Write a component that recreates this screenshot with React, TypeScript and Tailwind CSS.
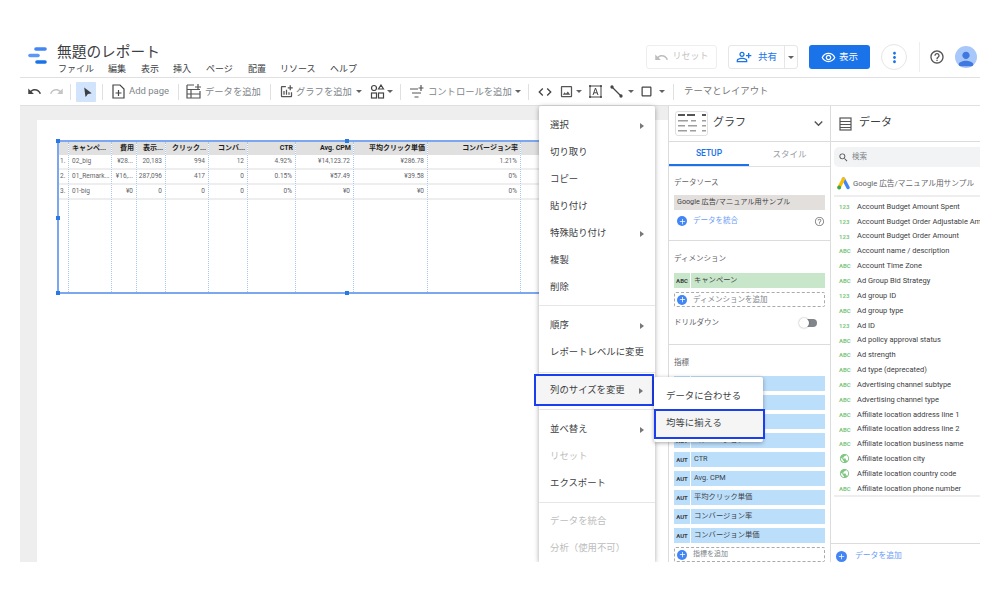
import {
  MdUndo,
  MdRedo,
  MdOutlinePersonAddAlt,
  MdOutlineRemoveRedEye,
  MdMoreVert,
  MdHelpOutline,
  MdSearch,
  MdExpandMore,
  MdCode,
  MdOutlineImage,
  MdCropSquare,
  MdOutlineAddchart,
  MdPublic,
  MdPerson,
  MdAdd,
  MdNavigation,
} from 'react-icons/md';

const font = { fontFamily: '"Roboto", "Noto Sans CJK JP", sans-serif' };

const menuBar = [
  { label: 'ファイル', w: 'w-[50px]' },
  { label: '編集', w: 'w-[33px]' },
  { label: '表示', w: 'w-[32px]' },
  { label: '挿入', w: 'w-[33px]' },
  { label: 'ページ', w: 'w-[42px]' },
  { label: '配置', w: 'w-[32px]' },
  { label: 'リソース', w: 'w-[50px]' },
  { label: 'ヘルプ', w: 'w-[40px]' },
];

const columns = [
  { w: 'w-[10px]', head: '', cells: ['1.', '2.', '3.'], left: true },
  { w: 'w-[43px]', head: 'キャンペ...', cells: ['02_big', '01_Remark...', '01-big'], left: true },
  { w: 'w-[25px]', head: '費用', cells: ['¥28...', '¥16,...', '¥0'], left: false },
  { w: 'w-[29px]', head: '表示...', cells: ['20,183', '287,096', '0'], left: false },
  { w: 'w-[43px]', head: 'クリック...', cells: ['994', '417', '0'], left: false },
  { w: 'w-[39px]', head: 'コンバ...', cells: ['12', '0', '0'], left: false },
  { w: 'w-[48px]', head: 'CTR', cells: ['4.92%', '0.15%', '0%'], left: false },
  { w: 'w-[58px]', head: 'Avg. CPM', cells: ['¥14,123.72', '¥57.49', '¥0'], left: false },
  { w: 'w-[74px]', head: '平均クリック単価', cells: ['¥286.78', '¥39.58', '¥0'], left: false },
  { w: 'w-[93px]', head: 'コンバージョン率', cells: ['1.21%', '0%', '0%'], left: false },
  { w: 'w-[114px]', head: '', cells: ['', '', ''], left: false },
];

// the first rows sit under the submenu, so their names never show
const metrics = ['', '', '', 'コンバージョン', 'CTR', 'Avg. CPM', '平均クリック単価', 'コンバージョン率', 'コンバージョン単価'];

const fields = [
  ['123', 'Account Budget Amount Spent'],
  ['123', 'Account Budget Order Adjustable Amount'],
  ['123', 'Account Budget Order Amount'],
  ['ABC', 'Account name / description'],
  ['ABC', 'Account Time Zone'],
  ['ABC', 'Ad Group Bid Strategy'],
  ['123', 'Ad group ID'],
  ['ABC', 'Ad group type'],
  ['123', 'Ad ID'],
  ['ABC', 'Ad policy approval status'],
  ['ABC', 'Ad strength'],
  ['ABC', 'Ad type (deprecated)'],
  ['ABC', 'Advertising channel subtype'],
  ['ABC', 'Advertising channel type'],
  ['ABC', 'Affiliate location address line 1'],
  ['ABC', 'Affiliate location address line 2'],
  ['ABC', 'Affiliate location business name'],
  ['GEO', 'Affiliate location city'],
  ['GEO', 'Affiliate location country code'],
  ['ABC', 'Affiliate location phone number'],
];

function Caret({ className = '' }: { className?: string }) {
  return <span className={`inline-block w-0 h-0 border-x-[3px] border-x-transparent border-t-[3px] border-t-[#5f6368] ${className}`} />;
}

function SideArrow() {
  return <span className="inline-block w-0 h-0 border-y-[3.5px] border-y-transparent border-l-[4px] border-l-[#777]" />;
}

function Sep({ className = '' }: { className?: string }) {
  return <div className={`w-px h-[16px] bg-[#e0e0e0] shrink-0 ${className}`} />;
}

function PlusDot({ className = '' }: { className?: string }) {
  return (
    <span className={`flex items-center justify-center rounded-full bg-[#4285f4] text-white shrink-0 ${className}`}>
      <MdAdd size={9} />
    </span>
  );
}

function Logo() {
  return (
    <svg width="20" height="20" viewBox="0 0 20 20">
      <line x1="8" y1="3" x2="17" y2="3" stroke="#4285f4" strokeWidth="3.6" strokeLinecap="round" />
      <line x1="2" y1="9.5" x2="10" y2="9.5" stroke="#5e97f6" strokeWidth="3.6" strokeLinecap="round" />
      <line x1="9" y1="16" x2="17" y2="16" stroke="#1a73e8" strokeWidth="3.6" strokeLinecap="round" />
    </svg>
  );
}

function AddPageIcon() {
  return (
    <svg width="13" height="15" viewBox="0 0 13 15" fill="none" stroke="#444" strokeWidth="1.2">
      <path d="M1 1h7l4 4v9H1z" />
      <path d="M6.500 6v6M3.500 9h6" />
    </svg>
  );
}

function AddDataIcon() {
  return (
    <svg width="16" height="15" viewBox="0 0 16 15" fill="none" stroke="#555" strokeWidth="1.2">
      <path d="M1 1h7M1 1v13h13V7M1 5.500h13M1 10h13M5 5.500V14" />
      <path d="M12 0v6M9 3h6" />
    </svg>
  );
}

function ComponentsIcon() {
  return (
    <svg width="15" height="15" viewBox="0 0 15 15" fill="none" stroke="#444" strokeWidth="1.2">
      <circle cx="4" cy="4" r="2.500" />
      <path d="M11 1l2.500 4h-5z" />
      <rect x="1.500" y="9" width="5" height="5" />
      <rect x="8.500" y="9" width="5" height="5" />
    </svg>
  );
}

function ControlsIcon() {
  return (
    <svg width="15" height="13" viewBox="0 0 15 13" fill="none" stroke="#555" strokeWidth="1.2">
      <path d="M1 4h8M3 8h9M5.500 12h4" />
      <path d="M12 0v6M9.500 3h5" />
    </svg>
  );
}

function TextBoxIcon() {
  return (
    <svg width="13" height="13" viewBox="0 0 13 13" fill="none" stroke="#444" strokeWidth="1">
      <rect x="1" y="1" width="11" height="11" />
      <path d="M4 10l2.500-7 2.500 7M5 7.800h3" />
      <path d="M0 1h2M11 1h2M0 12h2M11 12h2" strokeWidth="1.600" />
    </svg>
  );
}

function LineIcon() {
  return (
    <svg width="13" height="13" viewBox="0 0 13 13" fill="#444" stroke="#444" strokeWidth="1.300">
      <path d="M2 2l9 9" />
      <circle cx="2" cy="2" r="1" />
      <circle cx="11" cy="11" r="1" />
    </svg>
  );
}

function TableThumb() {
  return (
    <svg width="30" height="22" viewBox="0 0 30 22" fill="#9e9e9e">
      <rect x="1" y="1" width="7" height="2" fill="#555" />
      <rect x="10" y="1" width="8" height="2" fill="#555" />
      <rect x="25" y="1" width="4" height="2" fill="#555" />
      <rect x="1" y="7" width="10" height="1.500" />
      <rect x="14" y="7" width="5" height="1.500" />
      <rect x="25" y="7" width="4" height="1.500" />
      <rect x="1" y="12" width="7" height="1.500" />
      <rect x="11" y="12" width="9" height="1.500" />
      <rect x="25" y="12" width="4" height="1.500" />
      <rect x="1" y="17" width="9" height="1.500" />
      <rect x="13" y="17" width="6" height="1.500" />
      <rect x="25" y="17" width="4" height="1.500" />
    </svg>
  );
}

function FieldsIcon() {
  return (
    <svg width="13" height="14" viewBox="0 0 13 14" fill="none" stroke="#555" strokeWidth="1.200">
      <rect x="1" y="1" width="11" height="12" />
      <path d="M1 4.500h11M1 7.500h11M1 10.500h11" />
    </svg>
  );
}

function AdsIcon() {
  return (
    <svg width="13" height="13" viewBox="0 0 13 13">
      <line x1="6.500" y1="2" x2="11" y2="10.500" stroke="#4285f4" strokeWidth="3.400" strokeLinecap="round" />
      <line x1="6.500" y1="2" x2="2" y2="10.500" stroke="#fbbc04" strokeWidth="3.400" strokeLinecap="round" />
      <circle cx="2.200" cy="10.500" r="1.900" fill="#34a853" />
    </svg>
  );
}

function Handle({ className }: { className: string }) {
  return <div className={`absolute w-[4px] h-[4px] bg-[#2a78e4] ${className}`} />;
}

function MenuItem({ label, arrow, disabled }: { label: string; arrow?: boolean; disabled?: boolean }) {
  return (
    <div
      className={`h-[27px] pl-[11px] pr-[11px] flex items-center justify-between text-[9.4px] ${
        disabled ? 'text-[#bdbdbd]' : 'text-[#3c4043]'
      }`}
    >
      <span className="whitespace-nowrap">{label}</span>
      {arrow && <SideArrow />}
    </div>
  );
}

function ChipLabel({ text }: { text: string }) {
  return <span className="text-[6px] font-bold text-[#3c4043]">{text}</span>;
}

export default function App() {
  return (
    <div className="w-[1000px] h-[600px] bg-white pt-[40px] px-[20px] overflow-hidden" style={font}>
      <div className="relative w-[960px] h-[522px] flex flex-col overflow-hidden">
        {/* Header */}
        <div className="h-[38px] shrink-0 border-b border-[#e0e0e0] flex">
          <div className="ml-[8px] mt-[6px] shrink-0">
            <Logo />
          </div>
          <div className="ml-[9px] flex-1 min-w-0">
            <div className="text-[14.7px] leading-[18px] mt-[3px] text-[#3c4043]">無題のレポート</div>
            <div className="flex text-[9px] leading-[12px] mt-[2px] ml-[1px] text-[#3c4043]">
              {menuBar.map((m) => (
                <span key={m.label} className={`${m.w} whitespace-nowrap`}>
                  {m.label}
                </span>
              ))}
            </div>
          </div>
          <div className="flex items-center h-[36px] pb-[7px] pt-[5px] shrink-0">
            <div className="w-[71px] h-[24px] border border-[#eeeeee] rounded-[3px] flex items-center justify-center gap-[3px] text-[9px] text-[#c4c4c4]">
              <MdUndo size={15} className="text-[#bdbdbd]" />
              リセット
            </div>
            <div className="ml-[11px] w-[70px] h-[24px] border border-[#e6e6e6] rounded-[3px] flex items-center text-[9.5px] text-[#1a73e8]">
              <div className="flex-1 flex items-center justify-center gap-[6px] border-r border-[#e6e6e6] h-full">
                <MdOutlinePersonAddAlt size={16} />
                共有
              </div>
              <div className="w-[12px] flex justify-center">
                <Caret className="border-t-[#1a73e8]" />
              </div>
            </div>
            <div className="ml-[11px] w-[61px] h-[24px] bg-[#1a73e8] rounded-[3px] flex items-center justify-center gap-[3px] text-[9.500px] text-white">
              <MdOutlineRemoveRedEye size={15} />
              表示
            </div>
            <div className="ml-[11px] w-[26px] h-[26px] rounded-full border border-[#e6e6e6] flex items-center justify-center text-[#1a73e8]">
              <MdMoreVert size={17} />
            </div>
            <div className="ml-[12px] w-px h-[30px] bg-[#eeeeee]" />
            <MdHelpOutline size={16} className="ml-[9px] text-[#555]" />
            <div className="ml-[10px] mr-[3px] w-[22px] h-[22px] rounded-full bg-[#a8c7fa] flex items-end justify-center overflow-hidden text-[#3f78e0]">
              <MdPerson size={24} className="-mb-[3px]" />
            </div>
          </div>
        </div>

        {/* Toolbar */}
        <div className="h-[28px] shrink-0 border-b border-[#e0e0e0] flex items-center text-[9.300px] text-[#80868b]">
          <MdUndo size={15} className="ml-[7px] text-[#444]" />
          <MdRedo size={15} className="ml-[7px] text-[#c4c4c4]" />
          <Sep className="ml-[6px]" />
          <div className="ml-[5px] w-[20px] h-[20px] bg-[#d2e3fc] rounded-[1px] flex items-center justify-center">
            <MdNavigation size={11} className="text-[#3c4043] -rotate-30" />
          </div>
          <Sep className="ml-[6px]" />
          <div className="ml-[9px] shrink-0">
            <AddPageIcon />
          </div>
          <span className="ml-[4px] w-[40px] whitespace-nowrap text-[9.500px]">Add page</span>
          <Sep className="ml-[9px]" />
          <div className="ml-[7px] shrink-0">
            <AddDataIcon />
          </div>
          <span className="ml-[3px] w-[56px] whitespace-nowrap">データを追加</span>
          <Sep className="ml-[9px]" />
          <div className="ml-[8px] shrink-0">
            <MdOutlineAddchart size={15} className="text-[#555]" />
          </div>
          <span className="ml-[2px] w-[56px] whitespace-nowrap">グラフを追加</span>
          <Caret className="ml-[4px]" />
          <div className="ml-[8px] shrink-0">
            <ComponentsIcon />
          </div>
          <Caret className="ml-[2px]" />
          <Sep className="ml-[7px]" />
          <div className="ml-[8px] shrink-0">
            <ControlsIcon />
          </div>
          <span className="ml-[4px] w-[86px] whitespace-nowrap">コントロールを追加</span>
          <Caret className="ml-[1px]" />
          <Sep className="ml-[7px]" />
          <MdCode size={16} className="ml-[8px] text-[#444]" />
          <MdOutlineImage size={15} className="ml-[6px] text-[#555]" />
          <Caret className="ml-[2px]" />
          <div className="ml-[7px] shrink-0">
            <TextBoxIcon />
          </div>
          <div className="ml-[8px] shrink-0">
            <LineIcon />
          </div>
          <Caret className="ml-[5px]" />
          <MdCropSquare size={15} className="ml-[5px] text-[#444]" />
          <Caret className="ml-[5px]" />
          <Sep className="ml-[8px]" />
          <span className="ml-[10px] whitespace-nowrap text-[9.400px] text-[#757575]">テーマとレイアウト</span>
        </div>

        {/* Body */}
        <div className="flex-1 min-h-0 flex">
          {/* Canvas */}
          <div className="w-[648px] shrink-0 bg-[#eeeeee] pl-[17px] pt-[14px] overflow-hidden">
            <div className="w-[640px] h-[460px] bg-white pl-[20px] pt-[20px]">
              <div className="relative w-[580px] h-[154px] border-2 border-[#7aa7f0] flex">
                {columns.map((c, i) => (
                  <div key={i} className={`${c.w} shrink-0 border-r border-dotted border-[#a9c6f5] flex flex-col`}>
                    <div
                      className={`h-[13px] shrink-0 bg-[#e0e0e0] flex items-center px-[2px] text-[7px] font-bold text-[#212121] whitespace-nowrap overflow-hidden ${
                        c.left ? 'justify-start pl-[3px]' : 'justify-end'
                      }`}
                    >
                      {c.head}
                    </div>
                    {c.cells.map((v, j) => (
                      <div
                        key={j}
                        className={`h-[15px] shrink-0 border-b-2 border-[#eeeeee] flex items-center text-[6.500px] text-[#5f6368] whitespace-nowrap overflow-hidden ${
                          i === 0 ? 'px-[1px]' : 'px-[3px]'
                        } ${c.left ? 'justify-start' : 'justify-end'}`}
                      >
                        {v}
                      </div>
                    ))}
                  </div>
                ))}
                <Handle className="-left-[3px] -top-[3px]" />
                <Handle className="left-[286px] -top-[3px]" />
                <Handle className="-left-[3px] top-[74px]" />
                <Handle className="-left-[3px] -bottom-[3px]" />
                <Handle className="left-[286px] -bottom-[3px]" />
              </div>
            </div>
          </div>

          {/* Chart panel */}
          <div className="w-[163px] shrink-0 border-l border-r border-[#dcdcdc] flex flex-col text-[#5f6368] overflow-hidden">
            <div className="h-[36px] shrink-0 border-b border-[#dcdcdc] flex items-center pl-[6px] pr-[3px]">
              <div className="w-[33px] h-[25px] border border-[#e0e0e0] rounded-[3px] flex items-center justify-center shrink-0">
                <TableThumb />
              </div>
              <span className="ml-[5px] flex-1 text-[11px] text-[#3c4043]">グラフ</span>
              <MdExpandMore size={17} className="text-[#555]" />
            </div>
            <div className="h-[25px] shrink-0 border-b border-[#e0e0e0] flex text-[8.500px]">
              <div className="w-[80px] border-b-2 border-[#1a73e8] flex items-center justify-center pt-[1px] font-medium text-[#1a73e8]">SETUP</div>
              <div className="flex-1 flex items-center justify-center pt-[1px] text-[#9aa0a6]">スタイル</div>
            </div>
            <div className="px-[5px] shrink-0 h-[74px] border-b border-[#dcdcdc] pt-[10px]">
              <div className="text-[7.500px] leading-[12px]">データソース</div>
              <div className="mt-[6px] h-[15px] bg-[#e3dfdc] flex items-center pl-[3px] text-[7.200px] text-[#3c4043] whitespace-nowrap">
                Google 広告/マニュアル用サンプル
              </div>
              <div className="mt-[4px] h-[14px] flex items-center pl-[3px] text-[7.500px] text-[#6a9cf5]">
                <PlusDot className="w-[10px] h-[10px]" />
                <span className="ml-[6px] flex-1">データを統合</span>
                <MdHelpOutline size={11} className="text-[#8a8a8a]" />
              </div>
            </div>
            <div className="px-[5px] shrink-0 h-[104px] border-b border-[#dcdcdc] pt-[12px]">
              <div className="text-[7.500px] leading-[12px]">ディメンション</div>
              <div className="mt-[8px] h-[15px] bg-[#c8e6c9] flex items-center text-[7.300px] text-[#3c4043]">
                <div className="w-[17px] h-full border-r border-white flex items-center justify-center">
                  <ChipLabel text="ABC" />
                </div>
                <span className="ml-[3px]">キャンペーン</span>
              </div>
              <div className="mt-[4px] h-[15px] border border-dashed border-[#aaaaaa] rounded-[2px] flex items-center pl-[2px] text-[7.500px] text-[#80868b]">
                <PlusDot className="w-[10px] h-[10px]" />
                <span className="ml-[6px]">ディメンションを追加</span>
              </div>
              <div className="mt-[9px] h-[14px] flex items-center justify-between pr-[8px] text-[7.500px]">
                ドリルダウン
                <div className="relative w-[17px] h-[8px] rounded-full bg-[#80868b]">
                  <div className="absolute -left-[1px] -top-[1px] w-[10px] h-[10px] rounded-full bg-white shadow-[0_0_2px_rgba(0,0,0,0.4)]" />
                </div>
              </div>
            </div>
            <div className="px-[5px] pt-[12px]">
              <div className="text-[7.500px] leading-[12px]">指標</div>
              <div className="mt-[7px] flex flex-col gap-[4px]">
                {metrics.map((m, i) => (
                  <div key={i} className="h-[15px] bg-[#bbdefb] flex items-center text-[7.300px] text-[#3c4043] shrink-0">
                    <div className="w-[17px] h-full border-r border-white flex items-center justify-center">
                      <ChipLabel text="AUT" />
                    </div>
                    <span className="ml-[3px] whitespace-nowrap">{m}</span>
                  </div>
                ))}
                <div className="h-[15px] border border-dashed border-[#aaaaaa] rounded-[2px] flex items-center pl-[2px] text-[7px] text-[#80868b] shrink-0">
                  <PlusDot className="w-[10px] h-[10px]" />
                  <span className="ml-[6px]">指標を追加</span>
                </div>
              </div>
            </div>
          </div>

          {/* Data panel */}
          <div className="flex-1 min-w-0 flex flex-col overflow-hidden">
            <div className="h-[36px] shrink-0 border-b border-[#dcdcdc] flex items-center pl-[8px]">
              <FieldsIcon />
              <span className="ml-[7px] text-[11px] text-[#3c4043]">データ</span>
            </div>
            <div className="mt-[5px] ml-[3px] h-[20px] shrink-0 bg-[#f1f3f4] rounded-l-[5px] flex items-center pl-[4px] text-[7.500px] text-[#80868b]">
              <MdSearch size={11} className="text-[#555]" />
              <span className="ml-[3px]">検索</span>
            </div>
            <div className="ml-[3px] h-[30px] pt-[5px] shrink-0 border-b-2 border-[#eeeeee] flex items-center text-[7.700px] text-[#5f6368] whitespace-nowrap">
              <div className="ml-[3px]">
                <AdsIcon />
              </div>
              <span className="ml-[3px]">Google 広告/マニュアル用サンプル</span>
            </div>
            <div className="ml-[3px] pt-[2px] h-[300px] shrink-0 border-b-2 border-[#eeeeee]">
              {fields.map(([t, name]) => (
                <div key={name} className="h-[14.85px] flex items-center whitespace-nowrap overflow-hidden text-[7.500px] text-[#3c4043]">
                  <div className="w-[23px] pl-[5px] shrink-0 flex items-center">
                    {t === 'GEO' ? (
                      <MdPublic size={11} className="text-[#81c784]" />
                    ) : (
                      <span className="text-[6px] font-bold text-[#81c784]">{t}</span>
                    )}
                  </div>
                  {name}
                </div>
              ))}
            </div>
            <div className="mt-[46px] h-[19px] shrink-0 border-t border-[#dcdcdc] flex items-end pl-[5px] text-[7.800px] text-[#6a9cf5]">
              <PlusDot className="w-[11px] h-[11px] bg-[#1a73e8]" />
              <span className="ml-[8px]">データを追加</span>
            </div>
          </div>
        </div>

        {/* Context menu */}
        <div className="absolute left-[519px] top-[66px] w-[116px] h-[456px] bg-white shadow-[0_1px_5px_rgba(0,0,0,0.35)] rounded-t-[2px] pt-[6px]">
          <MenuItem label="選択" arrow />
          <MenuItem label="切り取り" />
          <MenuItem label="コピー" />
          <MenuItem label="貼り付け" />
          <MenuItem label="特殊貼り付け" arrow />
          <MenuItem label="複製" />
          <MenuItem label="削除" />
          <div className="h-px bg-[#e6e6e6] mt-[4px] mb-[6px]" />
          <MenuItem label="順序" arrow />
          <MenuItem label="レポートレベルに変更" />
          <div className="h-px bg-[#e6e6e6] mt-[6px] mb-[1px]" />
          <div className="h-[32px] -ml-[5px] mr-[1px] border-2 border-[#1a3ff0] bg-[#f5f5f5] pl-[14px] pr-[9px] pt-[1px] flex items-center justify-between text-[9.400px] text-[#3c4043]">
            列のサイズを変更
            <SideArrow />
          </div>
          <div className="h-px bg-[#e6e6e6] mt-[3px] mb-[6px]" />
          <MenuItem label="並べ替え" arrow />
          <MenuItem label="リセット" disabled />
          <MenuItem label="エクスポート" />
          <div className="h-px bg-[#e6e6e6] mt-[5px] mb-[5px]" />
          <MenuItem label="データを統合" disabled />
          <MenuItem label="分析（使用不可）" disabled />
        </div>

        {/* Submenu */}
        <div className="absolute left-[634px] top-[337px] w-[109px] h-[65px] bg-white rounded-[2px] shadow-[0_1px_4px_rgba(0,0,0,0.35)] pt-[6px] text-[9.400px] text-[#3c4043]">
          <div className="h-[26px] pl-[12px] flex items-center">データに合わせる</div>
          <div className="h-[30px] -mr-[2px] border-2 border-[#1a3ff0] bg-[#f5f5f5] pl-[10px] pb-[1px] flex items-center">均等に揃える</div>
        </div>
      </div>
    </div>
  );
}
